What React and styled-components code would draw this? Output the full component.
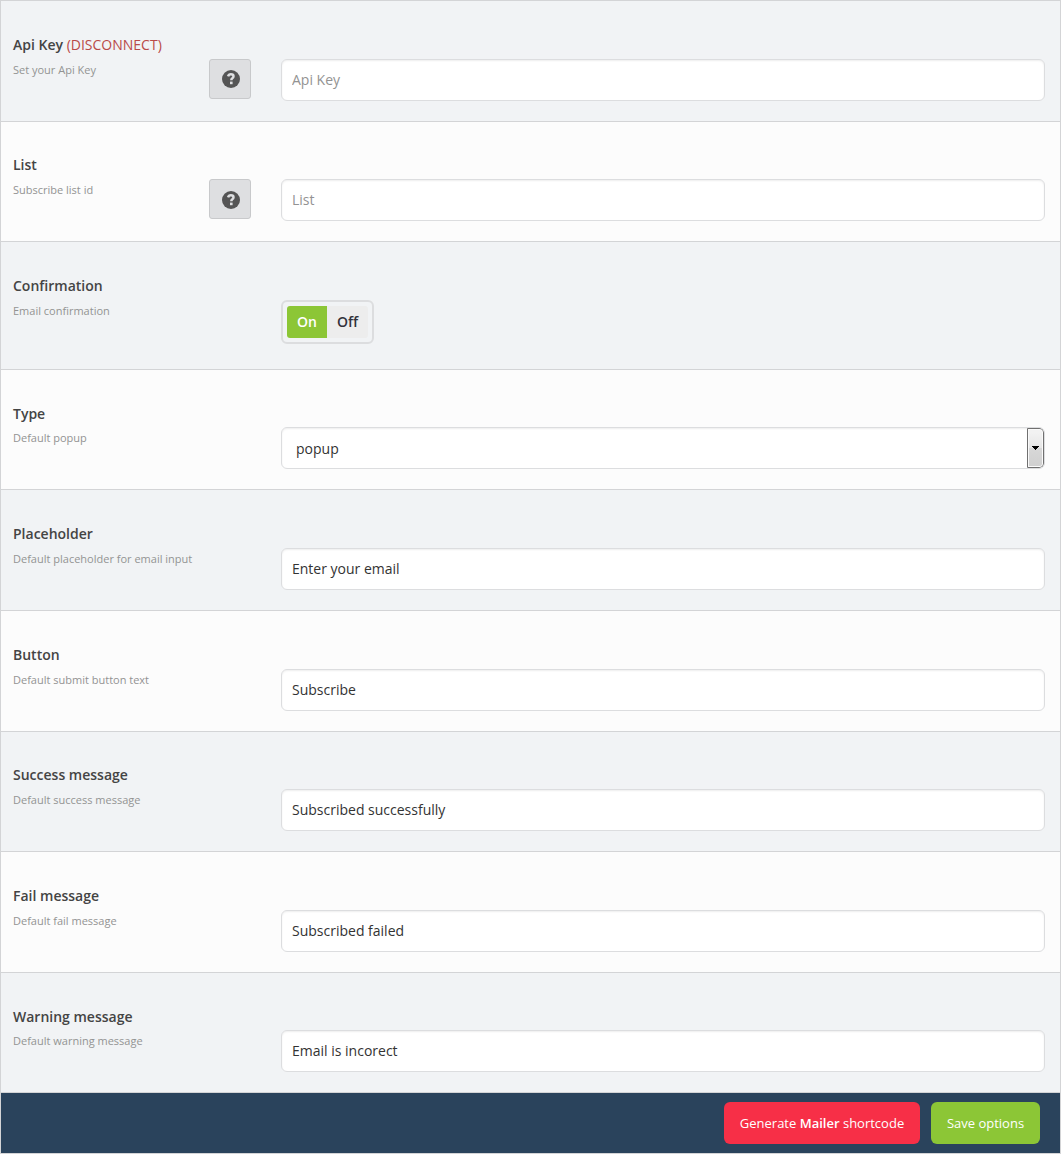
import React from "react";
import styled, { createGlobalStyle, css } from "styled-components";

const GlobalStyle = createGlobalStyle`
  *, *::before, *::after { box-sizing: border-box; }
  body { margin: 0; background: #fff; }
  body, input, button { font-family: "Open Sans", "Noto Sans", sans-serif; }
`;

const Panel = styled.form`
  width: 1061px;
  height: 1154px;
  border: 1px solid #d3d4d6;
  display: flex;
  flex-direction: column;
`;

const Row = styled.section`
  display: grid;
  grid-template-columns: 196px 42px 1fr;
  align-items: start;
  height: ${(p) => p.$height}px;
  padding: 0 15px 0 12px;
  border-bottom: 1px solid #d3d4d6;
  background: ${(p) => (p.$shaded ? "#f1f3f5" : "#fcfcfc")};
`;

const Labels = styled.div`
  padding-top: ${(p) => p.$top}px;
  white-space: nowrap;
`;

const Title = styled.h4`
  margin: 0;
  font-size: 14px;
  font-weight: 600;
  line-height: 20px;
  color: #444;
`;

const Disconnect = styled.span`
  font-weight: 400;
  color: #b94a48;
`;

const Description = styled.p`
  margin: ${(p) => p.$gap}px 0 0;
  font-size: 11px;
  line-height: 16px;
  color: #939393;
`;

const HelpButton = styled.button`
  display: flex;
  align-items: center;
  justify-content: center;
  width: 42px;
  height: 40px;
  margin: ${(p) => p.$top}px 0 0;
  padding: ${(p) => p.$nudge}px 0 0 2px;
  border: 1px solid #c8c9cb;
  border-radius: 3px;
  background: #dedfe1;
`;

const Control = styled.div`
  grid-column: 3;
  padding: ${(p) => p.$top}px 0 0 30px;
`;

const fieldBox = css`
  width: 100%;
  height: 42px;
  border: 1px solid #dcdddf;
  border-radius: 6px;
  background: #fff;
  box-shadow: inset 0 1px 2px rgba(0, 0, 0, 0.07);
  font-size: 14px;
  color: #333;
`;

const TextInput = styled.input`
  ${fieldBox}
  display: block;
  padding: 0 10px 2px;
  outline: none;
  &::placeholder { color: #939393; opacity: 1; }
`;

const Select = styled.div`
  ${fieldBox}
  display: flex;
  align-items: stretch;
  justify-content: space-between;
  padding-left: 14px;
  line-height: 41px;
  overflow: hidden;
`;

const SelectArrow = styled.span`
  display: flex;
  align-items: center;
  justify-content: center;
  width: 17px;
  border: 1px solid #707070;
  border-radius: 0 4px 4px 0;
  background: linear-gradient(#f2f2f2 0 10%, #e6e6e6 50%, #d8d8d8 50%, #cfcfcf);
  box-shadow: inset 0 0 0 1px #fafafa;
`;

const Switch = styled.div`
  display: inline-flex;
  width: 93px;
  height: 44px;
  padding: 4px;
  border: 2px solid #dcdddf;
  border-radius: 6px;
`;

const SwitchOption = styled.span`
  width: ${(p) => (p.$on ? 40 : 41)}px;
  height: 32px;
  border-radius: ${(p) => (p.$on ? "3px 0 0 3px" : "0 3px 3px 0")};
  background: ${(p) => (p.$on ? "#8cc636" : "#ededed")};
  color: ${(p) => (p.$on ? "#fff" : "#32323a")};
  font-size: 14px;
  font-weight: 600;
  line-height: 32px;
  text-align: center;
`;

const Footer = styled.footer`
  flex: 1;
  display: flex;
  align-items: center;
  justify-content: flex-end;
  gap: 11px;
  padding-right: 20px;
  background: #2a435c;
`;

const ActionButton = styled.button`
  width: ${(p) => p.$width}px;
  height: 42px;
  padding: 0;
  border: 0;
  border-radius: 6px;
  background: ${(p) => p.$color};
  color: #fff;
  font-size: 13px;
  white-space: nowrap;

  strong { font-weight: 600; }
`;

const QuestionIcon = () => (
  <svg width="18" height="18" viewBox="0 0 18 18" aria-hidden="true">
    <circle cx="9" cy="9" r="9" fill="#555" />
    <path
      d="M6.1 6.3C6.5 4.9 7.5 4.3 8.9 4.3c1.6 0 2.6.8 2.6 2 0 1-.5 1.5-1.2 2-.7.4-1 .8-1 1.9"
      fill="none"
      stroke="#dedfe1"
      strokeWidth="2.5"
    />
    <rect x="8" y="11.6" width="2.6" height="2.6" fill="#dedfe1" />
  </svg>
);

const rows = [
  { title: "Api Key", action: "(DISCONNECT)", text: "Set your Api Key", placeholder: "Api Key", help: true, nudge: 0, height: 121, label: 34, gap: 7, top: 58 },
  { title: "List", text: "Subscribe list id", placeholder: "List", help: true, nudge: 2, height: 120, label: 33, gap: 7, top: 57 },
  { title: "Confirmation", text: "Email confirmation", kind: "switch", height: 128, label: 34, gap: 7, top: 58 },
  { title: "Type", text: "Default popup", value: "popup", kind: "select", height: 120, label: 34, gap: 6, top: 57 },
  { title: "Placeholder", text: "Default placeholder for email input", value: "Enter your email", height: 121, label: 34, gap: 7, top: 58 },
  { title: "Button", text: "Default submit button text", value: "Subscribe", height: 121, label: 34, gap: 7, top: 58 },
  { title: "Success message", text: "Default success message", value: "Subscribed successfully", height: 120, label: 33, gap: 7, top: 57 },
  { title: "Fail message", text: "Default fail message", value: "Subscribed failed", height: 121, label: 34, gap: 7, top: 58 },
  { title: "Warning message", text: "Default warning message", value: "Email is incorect", height: 120, label: 34, gap: 6, top: 57 },
];

function Field({ row }) {
  if (row.kind === "switch") {
    return (
      <Switch>
        <SwitchOption $on>On</SwitchOption>
        <SwitchOption>Off</SwitchOption>
      </Switch>
    );
  }
  if (row.kind === "select") {
    return (
      <Select>
        {row.value}
        <SelectArrow>
          <svg width="7" height="4" viewBox="0 0 7 4" shapeRendering="crispEdges">
            <path d="M0 0h7v1H6v1H5v1H4v1H3V3H2V2H1V1H0z" fill="#000" />
          </svg>
        </SelectArrow>
      </Select>
    );
  }
  return <TextInput type="text" defaultValue={row.value} placeholder={row.placeholder} />;
}

export default function App() {
  return (
    <>
      <GlobalStyle />
      <Panel>
        {rows.map((row, i) => (
          <Row key={row.title} $height={row.height} $shaded={i % 2 === 0}>
            <Labels $top={row.label}>
              <Title>
                {row.title}
                {row.action && <Disconnect> {row.action}</Disconnect>}
              </Title>
              <Description $gap={row.gap}>{row.text}</Description>
            </Labels>
            {row.help && (
              <HelpButton type="button" $top={row.top} $nudge={row.nudge} aria-label="Help">
                <QuestionIcon />
              </HelpButton>
            )}
            <Control $top={row.top}>
              <Field row={row} />
            </Control>
          </Row>
        ))}
        <Footer>
          <ActionButton type="button" $width={196} $color="#f72f47">
            Generate <strong>Mailer</strong> shortcode
          </ActionButton>
          <ActionButton type="button" $width={109} $color="#8cc636">
            Save options
          </ActionButton>
        </Footer>
      </Panel>
    </>
  );
}
